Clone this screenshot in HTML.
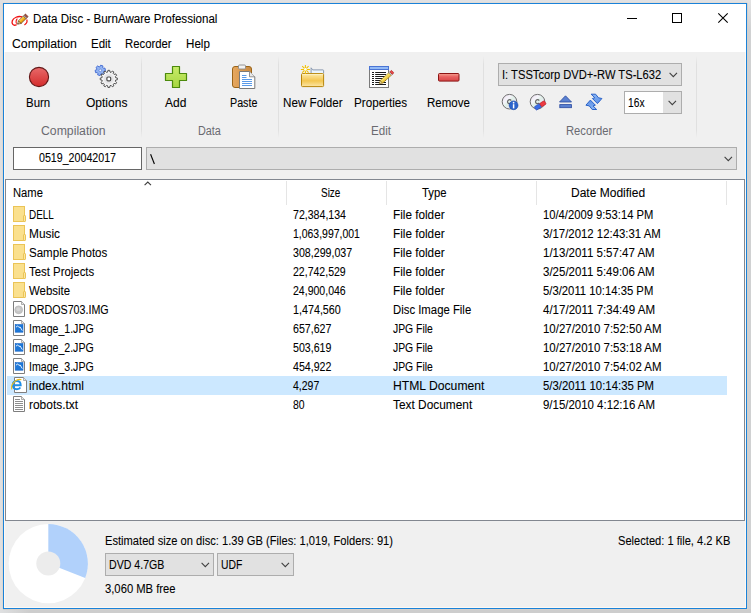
<!DOCTYPE html>
<html><head><meta charset="utf-8"><style>
html,body{margin:0;padding:0;width:751px;height:613px;overflow:hidden;background:#d2d2d2;}
body{position:relative;font-family:'Liberation Sans',sans-serif;}
.a{position:absolute;box-sizing:border-box;}
.t{position:absolute;font-family:"Liberation Sans",sans-serif;font-size:12px;line-height:14px;white-space:pre;color:#000;-webkit-text-stroke:0.08px currentColor;transform-origin:0 0;}
svg{position:absolute;overflow:visible;}

</style></head><body>
<!-- desktop shadow -->
<div class="a" style="left:0;top:0;width:751px;height:3px;background:#e1e1e3"></div>
<div class="a" style="left:3px;top:2px;width:744px;height:1px;background:#e3dcd5"></div>
<div class="a" style="left:0;top:0;width:3px;height:613px;background:#dfdfe0"></div>
<div class="a" style="left:2px;top:3px;width:1px;height:606px;background:#ddd7d0"></div>
<div class="a" style="left:747px;top:0;width:4px;height:613px;background:linear-gradient(#e3e3e4 0px,#d0d1d2 30px)"></div>
<div class="a" style="left:0;top:609px;width:751px;height:4px;background:linear-gradient(to right,#dfe0e1 0px,#cdcdcd 30px)"></div>
<div class="a" style="left:747px;top:3px;width:1px;height:607px;background:#d6d0ca"></div>
<div class="a" style="left:3px;top:609px;width:745px;height:1px;background:#d6d0ca"></div>
<!-- window -->
<div class="a" style="left:3px;top:3px;width:744px;height:606px;border:1px solid #1a82d9;background:#fdf9f4"></div>
<div class="a" style="left:4px;top:4px;width:742px;height:48px;background:#fff"></div>
<div class="a" style="left:5px;top:52px;width:740px;height:555px;background:#f0f0f0"></div>

<!-- list view -->
<div class="a" style="left:5px;top:179px;width:740px;height:342px;border:1px solid #828790;background:#fff"></div>
<!-- header separators -->
<div class="a" style="left:286px;top:181px;width:1px;height:24px;background:#e5e5e5"></div>
<div class="a" style="left:386px;top:181px;width:1px;height:24px;background:#e5e5e5"></div>
<div class="a" style="left:536px;top:181px;width:1px;height:24px;background:#e5e5e5"></div>
<div class="a" style="left:726px;top:181px;width:1px;height:24px;background:#e5e5e5"></div>
<!-- selected row -->
<div class="a" style="left:7px;top:376px;width:720px;height:19px;background:#cce8ff"></div>

<!-- toolbar separators -->
<div class="a" style="left:141px;top:56px;width:1px;height:82px;background:linear-gradient(#f0f0f0,#e0e0e0 10%,#e0e0e0 90%,#f0f0f0)"></div>
<div class="a" style="left:278px;top:56px;width:1px;height:82px;background:linear-gradient(#f0f0f0,#e0e0e0 10%,#e0e0e0 90%,#f0f0f0)"></div>
<div class="a" style="left:483px;top:56px;width:1px;height:82px;background:linear-gradient(#f0f0f0,#e0e0e0 10%,#e0e0e0 90%,#f0f0f0)"></div>
<div class="a" style="left:696px;top:56px;width:1px;height:82px;background:linear-gradient(#f0f0f0,#e0e0e0 10%,#e0e0e0 90%,#f0f0f0)"></div>

<!-- path textbox & dropdown -->
<div class="a" style="left:13px;top:147px;width:129px;height:23px;border:1px solid #666;background:#fff"></div>
<div class="a" style="left:146px;top:147px;width:591px;height:23px;border:1px solid #adadad;background:#e1e1e1"></div>
<!-- recorder dropdown -->
<div class="a" style="left:498px;top:63px;width:184px;height:23px;border:1px solid #adadad;background:#e1e1e1"></div>
<!-- speed -->
<div class="a" style="left:624px;top:91px;width:58px;height:23px;border:1px solid #adadad;background:#e1e1e1"></div>
<div class="a" style="left:625px;top:92px;width:38px;height:21px;background:#fff"></div>
<!-- bottom combos -->
<div class="a" style="left:105px;top:553px;width:109px;height:23px;border:1px solid #adadad;background:#e1e1e1"></div>
<div class="a" style="left:217px;top:553px;width:77px;height:23px;border:1px solid #adadad;background:#e1e1e1"></div>
<!-- title icon -->
<svg style="left:9px;top:9px" width="22" height="20" viewBox="0 0 22 20">
  <defs><linearGradient id="gpen" x1="0" y1="0" x2="0" y2="1"><stop offset="0" stop-color="#fde070"/><stop offset="0.5" stop-color="#f5b820"/><stop offset="1" stop-color="#d88a10"/></linearGradient></defs>
  <path d="M7.6 15.6 C4.2 17.6 2.4 14.4 3.3 11.8 C4.3 8.8 9 6.6 13.2 7.9" fill="none" stroke="#f01010" stroke-width="1.3"/>
  <path d="M8.4 9.6 C6.9 10.8 6.7 13.4 7.6 14.6" fill="none" stroke="#f01010" stroke-width="1.1"/>
  <path d="M17.7 10.6 C18.6 12.6 17.6 14.6 15.4 15.9" fill="none" stroke="#f01010" stroke-width="1.2"/>
  <g transform="translate(8.6 15.2) rotate(-44)">
    <path d="M0 0 L3 -1.9 L3 1.9 Z" fill="#f6e4b0" stroke="#5a3010" stroke-width="0.6" stroke-linejoin="round"/>
    <path d="M0 0 L1 -0.65 L1 0.65 Z" fill="#3a2010"/>
    <rect x="3" y="-1.9" width="7" height="3.8" fill="url(#gpen)" stroke="#5a3010" stroke-width="0.6"/>
    <rect x="10" y="-1.9" width="1.3" height="3.8" fill="#c8d4ec" stroke="#5a3010" stroke-width="0.5"/>
    <rect x="11.3" y="-1.9" width="1.5" height="3.8" rx="0.5" fill="#b4584a" stroke="#5a2010" stroke-width="0.6"/>
  </g>
</svg>
<!-- window controls -->
<div class="a" style="left:627px;top:18px;width:10px;height:1px;background:#000"></div>
<div class="a" style="left:672px;top:13px;width:10px;height:10px;border:1px solid #000"></div>
<svg style="left:718px;top:13px" width="10" height="10" viewBox="0 0 10 10"><path d="M0.3 0.3 L9.7 9.7 M9.7 0.3 L0.3 9.7" stroke="#000" stroke-width="1.1"/></svg>

<!-- Burn -->
<svg style="left:28px;top:66px" width="22" height="22" viewBox="0 0 22 22">
  <defs><linearGradient id="gb" x1="0" y1="0" x2="0" y2="1"><stop offset="0" stop-color="#e86a6a"/><stop offset="1" stop-color="#d42c2c"/></linearGradient></defs>
  <circle cx="11" cy="11" r="9.6" fill="url(#gb)" stroke="#641818" stroke-width="1.1"/>
</svg>
<!-- Options gears -->
<svg style="left:90px;top:60px" width="32" height="30" viewBox="0 0 32 30">
  <defs><radialGradient id="gg" cx="0.5" cy="0.5" r="0.5"><stop offset="0" stop-color="#ffffff"/><stop offset="0.45" stop-color="#e2e2e4"/><stop offset="0.75" stop-color="#f8f8f8"/><stop offset="1" stop-color="#ececec"/></radialGradient></defs>
  <g transform="translate(10.3 10.4)">
    <path d="M-0.40 -3.68 L0.33 -5.19 L2.65 -4.47 L2.41 -2.81 L2.99 -2.19 L4.66 -2.30 L5.20 0.06 L3.64 0.68 L3.39 1.49 L4.33 2.88 L2.55 4.53 L1.23 3.49 L0.40 3.68 L-0.33 5.19 L-2.65 4.47 L-2.41 2.81 L-2.99 2.19 L-4.66 2.30 L-5.20 -0.06 L-3.64 -0.68 L-3.39 -1.49 L-4.33 -2.88 L-2.55 -4.53 L-1.23 -3.49 Z" fill="#92b4f2" stroke="#3e66d0" stroke-width="0.9" stroke-linejoin="round"/>
    <circle r="1.3" fill="#f4f6fc" stroke="#3e66d0" stroke-width="0.6"/>
  </g>
  <g transform="translate(18.8 18.9)">
    <path d="M-1.22 -6.79 L-0.85 -8.56 L0.85 -8.56 L1.22 -6.79 L2.34 -6.49 L3.54 -7.84 L5.02 -6.98 L4.45 -5.27 L5.27 -4.45 L6.98 -5.02 L7.84 -3.54 L6.49 -2.34 L6.79 -1.22 L8.56 -0.85 L8.56 0.85 L6.79 1.22 L6.49 2.34 L7.84 3.54 L6.98 5.02 L5.27 4.45 L4.45 5.27 L5.02 6.98 L3.54 7.84 L2.34 6.49 L1.22 6.79 L0.85 8.56 L-0.85 8.56 L-1.22 6.79 L-2.34 6.49 L-3.54 7.84 L-5.02 6.98 L-4.45 5.27 L-5.27 4.45 L-6.98 5.02 L-7.84 3.54 L-6.49 2.34 L-6.79 1.22 L-8.56 0.85 L-8.56 -0.85 L-6.79 -1.22 L-6.49 -2.34 L-7.84 -3.54 L-6.98 -5.02 L-5.27 -4.45 L-4.45 -5.27 L-5.02 -6.98 L-3.54 -7.84 L-2.34 -6.49 Z" fill="url(#gg)" stroke="#4a4a4a" stroke-width="0.95" stroke-linejoin="round"/>
    <rect x="-1.9" y="-1.9" width="3.8" height="3.8" rx="1.1" fill="#fff" stroke="#4a4a4a" stroke-width="1.2"/>
  </g>
</svg>
<!-- Add -->
<svg style="left:164px;top:65px" width="24" height="24" viewBox="0 0 24 24">
  <defs><linearGradient id="ga" x1="0" y1="0" x2="0" y2="1"><stop offset="0" stop-color="#c8ec6a"/><stop offset="1" stop-color="#a6d640"/></linearGradient></defs>
  <path d="M8.5 1.5 H15.5 V8.5 H22.5 V15.5 H15.5 V22.5 H8.5 V15.5 H1.5 V8.5 H8.5 Z" fill="url(#ga)" stroke="#4c8a0c" stroke-width="1.2" stroke-linejoin="round"/>
</svg>
<!-- Paste -->
<svg style="left:230px;top:64px" width="28" height="26" viewBox="0 0 28 26">
  <defs><linearGradient id="gp" x1="0" y1="0" x2="1" y2="0"><stop offset="0" stop-color="#e7a860"/><stop offset="1" stop-color="#c98a40"/></linearGradient></defs>
  <rect x="2.5" y="2.5" width="19" height="21" rx="2.5" fill="url(#gp)" stroke="#9a6418" stroke-width="1"/>
  <rect x="8.5" y="1" width="7" height="4" rx="1" fill="#f2f2f2" stroke="#8a8a8a" stroke-width="0.9"/>
  <path d="M9.5 7.5 H19.5 L24.8 12.8 V24.5 H9.5 Z" fill="#fff" stroke="#7a7a7a" stroke-width="1"/>
  <path d="M19.5 7.5 V12.8 H24.8" fill="#e8e8e8" stroke="#7a7a7a" stroke-width="0.8"/>
  <path d="M12 11.5 H16.5 M12 13.5 H16.5 M12 15.5 H22 M12 17.5 H22 M12 19.5 H22 M12 21.5 H22" stroke="#5a9ae8" stroke-width="1"/>
</svg>
<!-- New Folder -->
<svg style="left:300px;top:64px" width="26" height="24" viewBox="0 0 26 24">
  <defs><linearGradient id="gf" x1="0" y1="0" x2="0" y2="1"><stop offset="0" stop-color="#fde9a8"/><stop offset="0.55" stop-color="#f3c650"/><stop offset="1" stop-color="#fce6a6"/></linearGradient></defs>
  <path d="M11.1 9.6 V3.8 L12.7 5.9 H23 Q23.6 5.9 23.6 6.6 V9.6" fill="#eaf4fc" stroke="#8a9ab0" stroke-width="1"/>
  <rect x="1.5" y="9.6" width="22.1" height="13" rx="1" fill="url(#gf)" stroke="#b8860b" stroke-width="1"/>
  <path d="M2.2 10.6 H22.9" stroke="#fff6d0" stroke-width="0.8"/>
  <path d="M5.4 0.9 V9.9 M0.9 5.4 H9.9 M2.2 2.2 L8.6 8.6 M8.6 2.2 L2.2 8.6" stroke="#f2c000" stroke-width="1.05"/>
  <circle cx="5.4" cy="5.4" r="1.4" fill="#fffef0"/>
</svg>
<!-- Properties -->
<svg style="left:367px;top:64px" width="28" height="26" viewBox="0 0 28 26">
  <defs><linearGradient id="gpn2" x1="0" y1="0" x2="0" y2="1"><stop offset="0" stop-color="#fbe878"/><stop offset="1" stop-color="#e8c030"/></linearGradient></defs>
  <rect x="2.5" y="2.5" width="19" height="21" fill="#fff" stroke="#7a7a7a" stroke-width="1"/>
  <rect x="2.5" y="2.5" width="19" height="3" fill="#92baf6" stroke="#4a74d4" stroke-width="1"/>
  <path d="M5 8.5 H7 M8.2 8.5 H19 M5 10.5 H7 M8.2 10.5 H19 M5 12.5 H7 M8.2 12.5 H19 M5 14.5 H7 M8.2 14.5 H19 M5 16.5 H7 M8.2 16.5 H19 M5 18.5 H7 M8.2 18.5 H19 M5 20.5 H7 M8.2 20.5 H19" stroke="#1a1a1a" stroke-width="1"/>
  <g transform="translate(12.2 19.8) rotate(-42)">
    <path d="M0 0 L3 -1.8 L3 1.8 Z" fill="#e8d8a0" stroke="#8a6a1a" stroke-width="0.6" stroke-linejoin="round"/>
    <rect x="3" y="-1.8" width="11.6" height="3.6" fill="url(#gpn2)" stroke="#9a7a1a" stroke-width="0.6"/>
    <rect x="14.6" y="-1.8" width="1.4" height="3.6" fill="#d0d0d0" stroke="#8a8a8a" stroke-width="0.5"/>
    <rect x="16" y="-1.8" width="2.2" height="3.6" rx="0.6" fill="#e84848" stroke="#a82020" stroke-width="0.6"/>
  </g>
</svg>
<!-- Remove -->
<svg style="left:437px;top:72px" width="24" height="11" viewBox="0 0 24 11">
  <defs><linearGradient id="gr" x1="0" y1="0" x2="0" y2="1"><stop offset="0" stop-color="#f4a090"/><stop offset="0.45" stop-color="#e86060"/><stop offset="1" stop-color="#d84848"/></linearGradient></defs>
  <rect x="1.5" y="1.5" width="20.5" height="7.6" rx="1" fill="url(#gr)" stroke="#8c1414" stroke-width="1"/>
</svg>
<!-- chevrons -->
<svg style="left:669px;top:72px" width="9" height="6" viewBox="0 0 9 6"><path d="M0.6 0.9 L4.3 4.6 L8 0.9" fill="none" stroke="#404040" stroke-width="1.1"/></svg>
<svg style="left:668px;top:100px" width="9" height="6" viewBox="0 0 9 6"><path d="M0.6 0.9 L4.3 4.6 L8 0.9" fill="none" stroke="#404040" stroke-width="1.1"/></svg>
<svg style="left:724px;top:156px" width="9" height="6" viewBox="0 0 9 6"><path d="M0.6 0.9 L4.3 4.6 L8 0.9" fill="none" stroke="#404040" stroke-width="1.1"/></svg>
<svg style="left:201px;top:562px" width="9" height="6" viewBox="0 0 9 6"><path d="M0.6 0.9 L4.3 4.6 L8 0.9" fill="none" stroke="#404040" stroke-width="1.1"/></svg>
<svg style="left:281px;top:562px" width="9" height="6" viewBox="0 0 9 6"><path d="M0.6 0.9 L4.3 4.6 L8 0.9" fill="none" stroke="#404040" stroke-width="1.1"/></svg>
<!-- sort arrow -->
<svg style="left:144px;top:181px" width="8" height="5" viewBox="0 0 8 5"><path d="M0.6 4.2 L3.8 1 L7 4.2" fill="none" stroke="#3c3c3c" stroke-width="1.1"/></svg>

<!-- recorder icons -->
<svg style="left:501px;top:93px" width="20" height="18" viewBox="0 0 20 18">
  <defs><linearGradient id="gd" x1="0" y1="0" x2="1" y2="1"><stop offset="0" stop-color="#f0e0f0"/><stop offset="0.35" stop-color="#f4f4fa"/><stop offset="0.5" stop-color="#e0f0e8"/><stop offset="0.7" stop-color="#e8e8f4"/><stop offset="1" stop-color="#d8d8ec"/></linearGradient></defs>
  <circle cx="8.5" cy="8.7" r="7.3" fill="url(#gd)" stroke="#6e6e6e" stroke-width="1"/>
  <path d="M10.2 7.6 A2 2 0 1 0 10.2 9.8" fill="none" stroke="#6a6a6a" stroke-width="1.2"/>
  <circle cx="12.6" cy="12.3" r="4.4" fill="#2c64cc" stroke="#1a48a0" stroke-width="0.6"/>
  <path d="M12.6 11.2 V15.4" stroke="#fff" stroke-width="1.5"/><circle cx="12.6" cy="9.7" r="0.85" fill="#fff"/>
</svg>
<svg style="left:529px;top:93px" width="20" height="18" viewBox="0 0 20 18">
  <circle cx="8.5" cy="8.7" r="7.3" fill="url(#gd)" stroke="#6e6e6e" stroke-width="1"/>
  <path d="M10.2 7.6 A2 2 0 1 0 10.2 9.8" fill="none" stroke="#6a6a6a" stroke-width="1.2"/>
  <g transform="translate(11.3 12.4) rotate(-32)">
    <rect x="-6" y="-2" width="6.4" height="4" rx="0.8" fill="#3a6ce6" stroke="#2248b8" stroke-width="0.6"/>
    <rect x="0.4" y="-2" width="5.4" height="4" rx="0.8" fill="#ee3a40" stroke="#b82028" stroke-width="0.6"/>
  </g>
</svg>
<svg style="left:558px;top:95px" width="15" height="14" viewBox="0 0 15 14">
  <path d="M7.5 0.8 L13.5 7 H1.5 Z" fill="#5a80d0" stroke="#2a4aa0" stroke-width="0.8" stroke-linejoin="round"/>
  <rect x="1.8" y="9.6" width="11.6" height="3.1" fill="#5a80d0" stroke="#2a4aa0" stroke-width="0.8"/>
</svg>
<svg style="left:582px;top:91px" width="24" height="22" viewBox="0 0 24 22">
  <defs><linearGradient id="gs" x1="0" y1="0" x2="0" y2="1"><stop offset="0" stop-color="#8ab6f4"/><stop offset="1" stop-color="#5a8ee6"/></linearGradient></defs>
  <path id="ar" d="M9.1 3.2 L13.6 3.2 L16.5 6.8 L19.9 7.5 L15.4 12.6 L10.4 7.5 L12.8 6.8 Z" fill="url(#gs)" stroke="#2a62c8" stroke-width="1" stroke-linejoin="round"/>
  <path d="M9.1 3.2 L13.6 3.2 L16.5 6.8 L19.9 7.5 L15.4 12.6 L10.4 7.5 L12.8 6.8 Z" transform="rotate(180 11.9 10.85)" fill="url(#gs)" stroke="#2a62c8" stroke-width="1" stroke-linejoin="round"/>
</svg>

<!-- pie chart -->
<svg style="left:8px;top:523px" width="81" height="81" viewBox="0 0 81 81">
  <circle cx="40.3" cy="40.6" r="39.6" fill="#ffffff"/>
  <path d="M40.3 40.6 L40.3 1 A39.6 39.6 0 0 1 77.2 55.0 Z" fill="#b1d1fb"/>
  <circle cx="40.3" cy="40.6" r="12" fill="#ececec"/>
</svg>
<svg style="left:13px;top:205px" width="14" height="18" viewBox="0 0 14 18">
  <rect x="0.5" y="1.5" width="11" height="15" fill="#fae08e" stroke="#ebc456" stroke-width="1"/>
  <rect x="10.5" y="10.5" width="2" height="6" rx="0.6" fill="#fae6a4" stroke="#ebc456" stroke-width="1"/>
</svg>
<svg style="left:13px;top:224px" width="14" height="18" viewBox="0 0 14 18">
  <rect x="0.5" y="1.5" width="11" height="15" fill="#fae08e" stroke="#ebc456" stroke-width="1"/>
  <rect x="10.5" y="10.5" width="2" height="6" rx="0.6" fill="#fae6a4" stroke="#ebc456" stroke-width="1"/>
</svg>
<svg style="left:13px;top:243px" width="14" height="18" viewBox="0 0 14 18">
  <rect x="0.5" y="1.5" width="11" height="15" fill="#fae08e" stroke="#ebc456" stroke-width="1"/>
  <rect x="10.5" y="10.5" width="2" height="6" rx="0.6" fill="#fae6a4" stroke="#ebc456" stroke-width="1"/>
</svg>
<svg style="left:13px;top:262px" width="14" height="18" viewBox="0 0 14 18">
  <rect x="0.5" y="1.5" width="11" height="15" fill="#fae08e" stroke="#ebc456" stroke-width="1"/>
  <rect x="10.5" y="10.5" width="2" height="6" rx="0.6" fill="#fae6a4" stroke="#ebc456" stroke-width="1"/>
</svg>
<svg style="left:13px;top:281px" width="14" height="18" viewBox="0 0 14 18">
  <rect x="0.5" y="1.5" width="11" height="15" fill="#fae08e" stroke="#ebc456" stroke-width="1"/>
  <rect x="10.5" y="10.5" width="2" height="6" rx="0.6" fill="#fae6a4" stroke="#ebc456" stroke-width="1"/>
</svg>
<svg style="left:13px;top:300px" width="14" height="18" viewBox="0 0 14 18">
  <path d="M0.5 1.5 H8.5 L11.5 4.5 V16.5 H0.5 Z" fill="#fff" stroke="#7e7e7e" stroke-width="1"/>
  <path d="M8.5 1.5 V4.5 H11.5" fill="#e8e8e8" stroke="#9a9a9a" stroke-width="0.8"/>
  <circle cx="5.7" cy="9.8" r="3.9" fill="#c6c6c6" stroke="#b4b4b4" stroke-width="0.7"/><circle cx="5.3" cy="9.3" r="2" fill="#d6d6d6"/>
</svg>
<svg style="left:13px;top:319px" width="14" height="18" viewBox="0 0 14 18">
  <path d="M0.5 1.5 H8.5 L11.5 4.5 V16.5 H0.5 Z" fill="#fff" stroke="#7e7e7e" stroke-width="1"/>
  <path d="M8.5 1.5 V4.5 H11.5" fill="#e8e8e8" stroke="#9a9a9a" stroke-width="0.8"/>
  <rect x="2.2" y="5.6" width="7.8" height="7.6" fill="#1e78d8" stroke="#1462c4" stroke-width="0.6"/><path d="M3 8.2 L4.6 6.9 L6.2 8.6 L7 7.8 L9.3 11.6" fill="none" stroke="#fff" stroke-width="0.9"/>
</svg>
<svg style="left:13px;top:338px" width="14" height="18" viewBox="0 0 14 18">
  <path d="M0.5 1.5 H8.5 L11.5 4.5 V16.5 H0.5 Z" fill="#fff" stroke="#7e7e7e" stroke-width="1"/>
  <path d="M8.5 1.5 V4.5 H11.5" fill="#e8e8e8" stroke="#9a9a9a" stroke-width="0.8"/>
  <rect x="2.2" y="5.6" width="7.8" height="7.6" fill="#1e78d8" stroke="#1462c4" stroke-width="0.6"/><path d="M3 8.2 L4.6 6.9 L6.2 8.6 L7 7.8 L9.3 11.6" fill="none" stroke="#fff" stroke-width="0.9"/>
</svg>
<svg style="left:13px;top:357px" width="14" height="18" viewBox="0 0 14 18">
  <path d="M0.5 1.5 H8.5 L11.5 4.5 V16.5 H0.5 Z" fill="#fff" stroke="#7e7e7e" stroke-width="1"/>
  <path d="M8.5 1.5 V4.5 H11.5" fill="#e8e8e8" stroke="#9a9a9a" stroke-width="0.8"/>
  <rect x="2.2" y="5.6" width="7.8" height="7.6" fill="#1e78d8" stroke="#1462c4" stroke-width="0.6"/><path d="M3 8.2 L4.6 6.9 L6.2 8.6 L7 7.8 L9.3 11.6" fill="none" stroke="#fff" stroke-width="0.9"/>
</svg>
<svg style="left:11px;top:376px" width="17" height="18" viewBox="0 0 17 18">
  <path d="M3.5 1.5 H12.5 L15.5 4.5 V16.5 H3.5 Z" fill="#fff" stroke="#7e7e7e" stroke-width="1"/>
  <path d="M12.5 1.5 V4.5 H15.5" fill="#e8e8e8" stroke="#9a9a9a" stroke-width="0.8"/>
  <path d="M2 9.2 H9.7 Q9.7 5 5.8 5 Q1.8 5 1.8 9 Q1.8 13.2 5.8 13.2 Q8.3 13.2 9.4 11.5" fill="none" stroke="#1e8ee8" stroke-width="1.9"/>
  <path d="M0.7 13.4 Q-0.3 9.2 3.5 5.6 Q7.5 2.3 10.4 3.7" fill="none" stroke="#f2c21a" stroke-width="1.2"/>
</svg>
<svg style="left:13px;top:395px" width="14" height="18" viewBox="0 0 14 18">
  <path d="M0.5 1.5 H8.5 L11.5 4.5 V16.5 H0.5 Z" fill="#fff" stroke="#7e7e7e" stroke-width="1"/>
  <path d="M8.5 1.5 V4.5 H11.5" fill="#e8e8e8" stroke="#9a9a9a" stroke-width="0.8"/>
  <path d="M2 4.5 H7 M2 6.5 H10 M2 8.5 H10 M2 10.5 H10 M2 12.5 H10 M2 14.5 H10" stroke="#8e8e8e" stroke-width="1"/>
</svg>

<svg style="left:148px;top:152px" width="10" height="14" viewBox="0 0 10 14"><path d="M2.6 2.2 L6.4 12" stroke="#000" stroke-width="1.1"/></svg>

<div class="t" style="left:32.5px;top:12px;transform:scaleX(0.9644);color:#000">Data Disc - BurnAware Professional</div><div class="t" style="left:11.5px;top:37px;transform:scaleX(1.0241);color:#000">Compilation</div><div class="t" style="left:91.1px;top:37px;transform:scaleX(0.9571);color:#000">Edit</div><div class="t" style="left:125.4px;top:37px;transform:scaleX(0.9441);color:#000">Recorder</div><div class="t" style="left:185.5px;top:37px;transform:scaleX(0.9681);color:#000">Help</div><div class="t" style="left:26.4px;top:96px;transform:scaleX(0.9543);color:#000">Burn</div><div class="t" style="left:86.4px;top:96px;transform:scaleX(1.0010);color:#000">Options</div><div class="t" style="left:165.2px;top:96px;transform:scaleX(1.0019);color:#000">Add</div><div class="t" style="left:230.4px;top:96px;transform:scaleX(0.8929);color:#000">Paste</div><div class="t" style="left:283.4px;top:96px;transform:scaleX(0.9713);color:#000">New Folder</div><div class="t" style="left:353.8px;top:96px;transform:scaleX(0.9725);color:#000">Properties</div><div class="t" style="left:427.3px;top:96px;transform:scaleX(0.9600);color:#000">Remove</div><div class="t" style="left:40.8px;top:124px;transform:scaleX(1.0209);color:#6a6a70;-webkit-text-stroke:0">Compilation</div><div class="t" style="left:197.7px;top:124px;transform:scaleX(0.9030);color:#6a6a70;-webkit-text-stroke:0">Data</div><div class="t" style="left:371.0px;top:124px;transform:scaleX(0.9668);color:#6a6a70;-webkit-text-stroke:0">Edit</div><div class="t" style="left:565.7px;top:124px;transform:scaleX(0.9360);color:#6a6a70;-webkit-text-stroke:0">Recorder</div><div class="t" style="left:502.3px;top:68px;transform:scaleX(0.9307);color:#000">I: TSSTcorp DVD+-RW TS-L632</div><div class="t" style="left:628.2px;top:96px;transform:scaleX(0.8523);color:#000">16x</div><div class="t" style="left:39.0px;top:151px;transform:scaleX(0.8874);color:#000">0519_20042017</div><div class="t" style="left:12.7px;top:186px;transform:scaleX(0.9350);color:#000">Name</div><div class="t" style="left:320.5px;top:186px;transform:scaleX(0.8311);color:#000">Size</div><div class="t" style="left:421.5px;top:186px;transform:scaleX(0.9417);color:#000">Type</div><div class="t" style="left:571.4px;top:186px;transform:scaleX(1.0007);color:#000">Date Modified</div><div class="t" style="left:28.6px;top:208px;transform:scaleX(0.8258);color:#000">DELL</div><div class="t" style="left:293.0px;top:208px;transform:scaleX(0.8824);color:#000">72,384,134</div><div class="t" style="left:392.8px;top:208px;transform:scaleX(0.9794);color:#000">File folder</div><div class="t" style="left:543.0px;top:208px;transform:scaleX(0.9340);color:#000">10/4/2009 9:53:14 PM</div><div class="t" style="left:28.6px;top:227px;transform:scaleX(0.9890);color:#000">Music</div><div class="t" style="left:293.0px;top:227px;transform:scaleX(0.8717);color:#000">1,063,997,001</div><div class="t" style="left:392.8px;top:227px;transform:scaleX(0.9794);color:#000">File folder</div><div class="t" style="left:543.0px;top:227px;transform:scaleX(0.9492);color:#000">3/17/2012 12:43:31 AM</div><div class="t" style="left:28.6px;top:246px;transform:scaleX(0.9620);color:#000">Sample Photos</div><div class="t" style="left:293.0px;top:246px;transform:scaleX(0.8871);color:#000">308,299,037</div><div class="t" style="left:392.8px;top:246px;transform:scaleX(0.9794);color:#000">File folder</div><div class="t" style="left:543.0px;top:246px;transform:scaleX(0.9584);color:#000">1/13/2011 5:57:47 AM</div><div class="t" style="left:28.6px;top:265px;transform:scaleX(0.9490);color:#000">Test Projects</div><div class="t" style="left:293.0px;top:265px;transform:scaleX(0.8774);color:#000">22,742,529</div><div class="t" style="left:392.8px;top:265px;transform:scaleX(0.9794);color:#000">File folder</div><div class="t" style="left:543.0px;top:265px;transform:scaleX(0.9584);color:#000">3/25/2011 5:49:06 AM</div><div class="t" style="left:28.6px;top:284px;transform:scaleX(0.9527);color:#000">Website</div><div class="t" style="left:293.0px;top:284px;transform:scaleX(0.8774);color:#000">24,900,046</div><div class="t" style="left:392.8px;top:284px;transform:scaleX(0.9794);color:#000">File folder</div><div class="t" style="left:543.0px;top:284px;transform:scaleX(0.9411);color:#000">5/3/2011 10:14:35 PM</div><div class="t" style="left:28.6px;top:303px;transform:scaleX(0.8919);color:#000">DRDOS703.IMG</div><div class="t" style="left:293.0px;top:303px;transform:scaleX(0.8953);color:#000">1,474,560</div><div class="t" style="left:392.8px;top:303px;transform:scaleX(0.9457);color:#000">Disc Image File</div><div class="t" style="left:543.0px;top:303px;transform:scaleX(0.9610);color:#000">4/17/2011 7:34:49 AM</div><div class="t" style="left:28.6px;top:322px;transform:scaleX(0.8818);color:#000">Image_1.JPG</div><div class="t" style="left:293.0px;top:322px;transform:scaleX(0.8850);color:#000">657,627</div><div class="t" style="left:392.8px;top:322px;transform:scaleX(0.8649);color:#000">JPG File</div><div class="t" style="left:543.0px;top:322px;transform:scaleX(0.9548);color:#000">10/27/2010 7:52:50 AM</div><div class="t" style="left:28.6px;top:341px;transform:scaleX(0.8818);color:#000">Image_2.JPG</div><div class="t" style="left:293.0px;top:341px;transform:scaleX(0.8850);color:#000">503,619</div><div class="t" style="left:392.8px;top:341px;transform:scaleX(0.8649);color:#000">JPG File</div><div class="t" style="left:543.0px;top:341px;transform:scaleX(0.9548);color:#000">10/27/2010 7:53:18 AM</div><div class="t" style="left:28.6px;top:360px;transform:scaleX(0.8818);color:#000">Image_3.JPG</div><div class="t" style="left:293.0px;top:360px;transform:scaleX(0.8850);color:#000">454,922</div><div class="t" style="left:392.8px;top:360px;transform:scaleX(0.8649);color:#000">JPG File</div><div class="t" style="left:543.0px;top:360px;transform:scaleX(0.9548);color:#000">10/27/2010 7:54:02 AM</div><div class="t" style="left:28.6px;top:379px;transform:scaleX(1.0054);color:#000">index.html</div><div class="t" style="left:293.0px;top:379px;transform:scaleX(0.8724);color:#000">4,297</div><div class="t" style="left:392.8px;top:379px;transform:scaleX(1.0127);color:#000">HTML Document</div><div class="t" style="left:543.0px;top:379px;transform:scaleX(0.9471);color:#000">5/3/2011 10:14:35 PM</div><div class="t" style="left:28.6px;top:398px;transform:scaleX(0.9947);color:#000">robots.txt</div><div class="t" style="left:293.0px;top:398px;transform:scaleX(0.8683);color:#000">80</div><div class="t" style="left:392.8px;top:398px;transform:scaleX(0.9894);color:#000">Text Document</div><div class="t" style="left:543.0px;top:398px;transform:scaleX(0.9537);color:#000">9/15/2010 4:12:16 AM</div><div class="t" style="left:104.5px;top:534px;transform:scaleX(0.9286);color:#000">Estimated size on disc: 1.39 GB (Files: 1,019, Folders: 91)</div><div class="t" style="left:109.3px;top:558px;transform:scaleX(0.8835);color:#000">DVD 4.7GB</div><div class="t" style="left:220.7px;top:558px;transform:scaleX(0.8633);color:#000">UDF</div><div class="t" style="left:105.3px;top:582px;transform:scaleX(0.9367);color:#000">3,060 MB free</div><div class="t" style="left:618.0px;top:534px;transform:scaleX(0.9258);color:#000">Selected: 1 file, 4.2 KB</div>
</body></html>
